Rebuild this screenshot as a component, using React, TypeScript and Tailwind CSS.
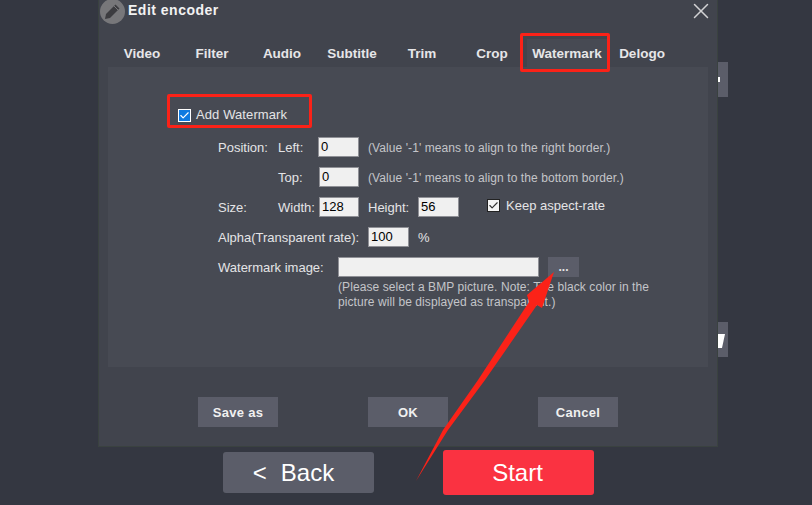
import { Check, X } from 'lucide-react'

const tabs = ['Video', 'Filter', 'Audio', 'Subtitle', 'Trim', 'Crop', 'Watermark', 'Delogo']

function Field({ value = '', className = 'w-[41px]' }: { value?: string; className?: string }) {
  return (
    <div className={`h-[20px] bg-[#f0f0f0] border border-[#8f9096] pl-[2px] text-[13px] leading-[18px] text-black ${className}`}>
      {value}
    </div>
  )
}

function Row({ children }: { children: React.ReactNode }) {
  return <div className="flex items-start h-[20px] mb-[10px] leading-[22px]">{children}</div>
}

function FooterButton({ label }: { label: string }) {
  return (
    <div className="w-[80px] h-[30px] bg-[#5b5d69] flex items-center justify-center pt-[1px] text-[13px] font-bold tracking-[0.3px] text-[#f0f0f0]">
      {label}
    </div>
  )
}

export default function App() {
  return (
    <div className="relative w-[812px] h-[505px] overflow-hidden bg-[#343741] font-['Liberation_Sans',Arial,sans-serif] text-[#e4e4e6]">
      {/* bits of the main window behind the dialog */}
      <div className="absolute left-[700px] top-[62px] w-[28px] h-[35px] bg-[#5b5d69] flex items-center justify-end pr-[8px]">
        <div className="w-[3px] h-[5px] bg-white" />
      </div>
      <div className="absolute left-[700px] top-[322px] w-[28px] h-[35px] bg-[#5b5d69] flex items-center justify-end pr-[3px]">
        <svg width="7" height="18" viewBox="0 0 7 18">
          <path d="M0 3h7L4 17H0z" fill="#fff" />
        </svg>
      </div>

      {/* dialog */}
      <div className="absolute left-[98px] top-0 w-[620px] h-[447px] bg-[#41444d] border border-[#3a4240] border-t-0">
        <div className="relative h-[39px]">
          <div className="absolute left-[1px] top-[-1px] w-[25px] h-[25px] rounded-full bg-[#77777a] flex items-center justify-center">
            <svg width="17" height="17" viewBox="0 0 17 17">
              <path d="M11.5 1.5l4 4-9.5 9.5-5 1 1-5z" fill="#3c3c40" />
              <path d="M10 3l4 4" stroke="#77777a" strokeWidth="1" />
            </svg>
          </div>
          <div className="absolute left-[29px] top-[2px] text-[14px] leading-[17px] font-bold tracking-[0.5px] text-[#f2f2f2]">Edit encoder</div>
          <X className="absolute right-[3px] top-[-2px] text-[#d2d2d4]" size={26} strokeWidth={1.5} absoluteStrokeWidth />
        </div>

        <div className="flex h-[28px] pl-[8px]">
          {tabs.map(t => (
            <div
              key={t}
              className={`flex items-center justify-center pt-[2px] text-[13.5px] font-bold text-[#e6e6e8] ${t === 'Watermark' ? 'w-[80px] bg-[#474a53]' : 'w-[70px]'}`}
            >
              {t}
            </div>
          ))}
        </div>

        <div className="mx-[9px] h-[300px] bg-[#474a53] pt-[38px] pl-[70px] text-[13px] leading-[20px]">
          <div className="flex items-center h-[20px] mb-[12px]">
            <div className="w-[13px] h-[13px] bg-[#0f7ae0] border border-white flex items-center justify-center">
              <Check size={11} strokeWidth={2.5} className="text-white" />
            </div>
            <span className="ml-[5px] tracking-[0.1px]">Add Watermark</span>
          </div>

          <div className="ml-[40px]">
            <Row>
              <span className="w-[60px]">Position:</span>
              <span className="w-[40px]">Left:</span>
              <Field value="0" />
              <span className="ml-[9px] text-[12px] tracking-[0.08px] text-[#c4c5c9]">(Value '-1' means to align to the right border.)</span>
            </Row>
            <Row>
              <span className="w-[60px]" />
              <span className="w-[41px]">Top:</span>
              <Field value="0" className="w-[40px]" />
              <span className="ml-[9px] text-[12px] tracking-[0.08px] text-[#c4c5c9]">(Value '-1' means to align to the bottom border.)</span>
            </Row>
            <Row>
              <span className="w-[60px]">Size:</span>
              <span className="w-[41px]">Width:</span>
              <Field value="128" className="w-[40px]" />
              <span className="ml-[9px] w-[50px]">Height:</span>
              <Field value="56" />
              <div className="ml-[28px] mt-[2px] w-[13px] h-[13px] bg-[#f4f4f4] border border-[#222] flex items-center justify-center">
                <Check size={11} strokeWidth={2.5} className="text-[#333]" />
              </div>
              <span className="ml-[6px] leading-[18px]">Keep aspect-rate</span>
            </Row>
            <Row>
              <span className="w-[150px]">Alpha(Transparent rate):</span>
              <Field value="100" />
              <span className="ml-[9px]">%</span>
            </Row>
            <Row>
              <span className="w-[120px]">Watermark image:</span>
              <Field className="w-[201px]" />
              <div className="ml-[9px] w-[31px] h-[20px] bg-[#5b5d69] flex items-center justify-center font-bold text-[12px]">...</div>
            </Row>
            <div className="ml-[120px] -mt-[7px] w-[330px] text-[12px] leading-[15px] tracking-[0.08px] text-[#c4c5c9]">
              (Please select a BMP picture. Note: The black color in the picture will be displayed as transparent.)
            </div>
          </div>
        </div>

        <div className="flex justify-between px-[99px] mt-[30px]">
          <FooterButton label="Save as" />
          <FooterButton label="OK" />
          <FooterButton label="Cancel" />
        </div>
      </div>

      {/* bottom buttons of the main window */}
      <div className="absolute left-[223px] top-[452px] w-[151px] h-[41px] rounded-[3px] bg-[#5b5d69] flex items-center justify-center pr-[10px] text-[24px] text-white">
        <span className="mr-[14px]">&lt;</span>Back
      </div>
      <div className="absolute left-[443px] top-[450px] w-[151px] h-[45px] rounded-[3px] bg-[#fa3241] flex items-center justify-center pr-[2px] text-[24px] text-white">
        Start
      </div>

      {/* red annotations */}
      <div className="absolute left-[167px] top-[94px] w-[145px] h-[34px] rounded-[2px] border-[3px] border-[#fb2218]" />
      <div className="absolute left-[520px] top-[33px] w-[90px] h-[39px] rounded-[2px] border-[3px] border-[#fb2218]" />
      <svg className="absolute left-0 top-0" width="812" height="505" viewBox="0 0 812 505">
        <polygon points="416,481 448,430 485,380 537,305 542,308 554,272 527,295 529,302 478,380 443,430" fill="#fb2218" />
      </svg>
    </div>
  )
}
